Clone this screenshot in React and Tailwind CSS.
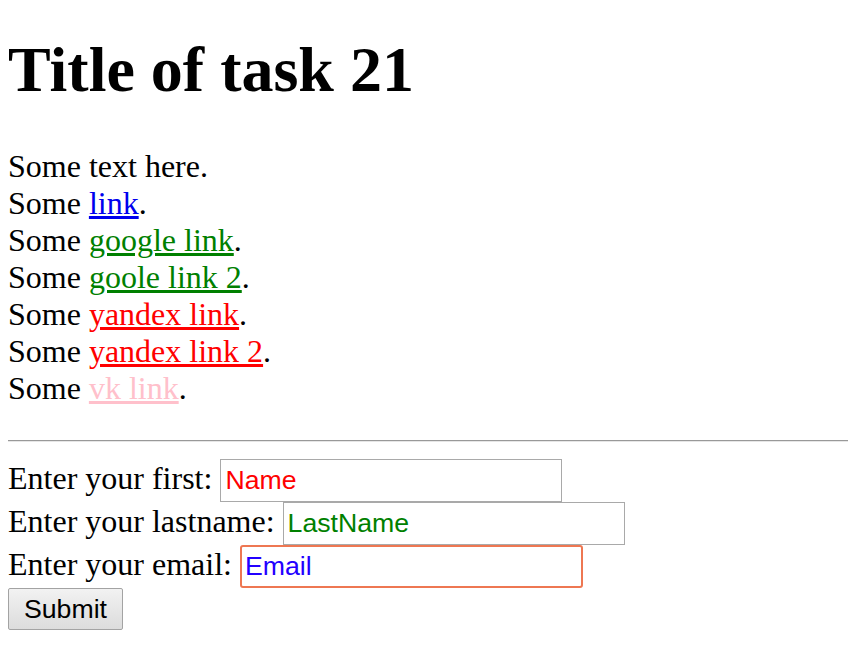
export default function App() {
  const linkRows = [
    { text: 'link', color: 'text-[#0000ee] decoration-[#0000ee]' },
    { text: 'google link', color: 'text-[#008000] decoration-[#008000]' },
    { text: 'goole link 2', color: 'text-[#008000] decoration-[#008000]' },
    { text: 'yandex link', color: 'text-[#ff0000] decoration-[#ff0000]' },
    { text: 'yandex link 2', color: 'text-[#ff0000] decoration-[#ff0000]' },
    { text: 'vk link', color: 'text-[#ffc0cb] decoration-[#ffc0cb]' }
  ]

  return (
    <div className="min-h-[660px] bg-white px-2 font-['Liberation_Serif',serif] text-[32px] leading-[normal] text-black">
      <h1 className="pt-[33px] mb-[41px] text-[64px] font-bold leading-[normal]">Title of task 21</h1>

      <p className="mb-[33px]">
        Some text here.
        {linkRows.map(row => (
          <span key={row.text}>
            <br />
            Some <a href="#" className={`underline ${row.color}`}>{row.text}</a>.
          </span>
        ))}
      </p>

      <div className="w-[840px] border-t border-b border-t-[#999999] border-b-[#e6e6e6]" />

      <form className="mt-[17px]" onSubmit={e => e.preventDefault()}>
        <div>
          Enter your first:{' '}
          <input
            defaultValue="Name"
            className="w-[342px] h-[43px] border border-[#a9a9a9] px-[4px] align-baseline font-['Liberation_Sans',sans-serif] text-[26.67px] text-[#ff0000] outline-none"
          />
        </div>
        <div>
          Enter your lastname:{' '}
          <input
            defaultValue="LastName"
            className="w-[342px] h-[43px] border border-[#a9a9a9] px-[4px] align-baseline font-['Liberation_Sans',sans-serif] text-[26.67px] text-[#008000] outline-none"
          />
        </div>
        <div>
          Enter your email:{' '}
          <input
            defaultValue="Email"
            className="w-[343px] h-[43px] rounded-[3px] border-2 border-[#ee7752] px-[3px] align-baseline font-['Liberation_Sans',sans-serif] text-[26.67px] text-[#2200ff] outline-none"
          />
        </div>
        <div>
          <button
            type="submit"
            className="w-[115px] h-[42px] rounded-[2px] border border-[#a3a3a3] bg-gradient-to-b from-[#f2f2f2] to-[#dcdcdc] align-baseline font-['Liberation_Sans',sans-serif] text-[26.67px] text-black"
          >
            Submit
          </button>
        </div>
      </form>
    </div>
  )
}
